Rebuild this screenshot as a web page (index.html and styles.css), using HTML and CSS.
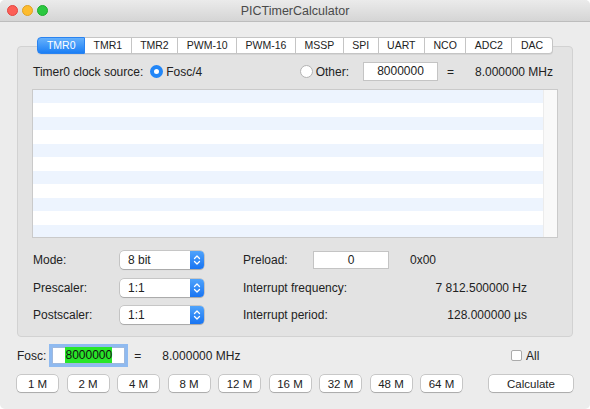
FILE: index.html
```html
<!DOCTYPE html>
<html>
	<head>
		<title>PICTimerCalculator</title>
		<link rel="stylesheet" href="styles.css">
	</head>
	<body>
		<div class="window">
			<div class="titlebar">
				<div class="lights">
					<span class="light light-red"></span>
					<span class="light light-yellow"></span>
					<span class="light light-green"></span>
				</div>
				<div class="title">PICTimerCalculator</div>
				<div></div>
			</div>

			<div class="content">
				<div class="tabs">
					<span class="tab is-selected">TMR0</span>
					<span class="tab">TMR1</span>
					<span class="tab">TMR2</span>
					<span class="tab">PWM-10</span>
					<span class="tab">PWM-16</span>
					<span class="tab">MSSP</span>
					<span class="tab">SPI</span>
					<span class="tab">UART</span>
					<span class="tab">NCO</span>
					<span class="tab">ADC2</span>
					<span class="tab">DAC</span>
				</div>

				<div class="panel">
					<div class="source-row">
						<span>Timer0 clock source:</span>
						<span class="radio-group fosc-radio"><span class="radio is-checked"></span>Fosc/4</span>
						<span class="radio-group other-radio"><span class="radio"></span>Other:</span>
						<div class="field other-field">8000000</div>
						<span class="equals">=</span>
						<span class="source-freq">8.000000 MHz</span>
					</div>

					<div class="table">
						<div class="table-rows"></div>
						<div class="table-scroll"></div>
					</div>

					<div class="form-grid">
						<span>Mode:</span>
						<div class="popup"><span>8 bit</span><span class="stepper"><svg width="8" height="12" viewBox="0 0 8 12"><path d="M1.5 4.5 L4 2 L6.5 4.5 M1.5 7.5 L4 10 L6.5 7.5" fill="none" stroke="white" stroke-width="1.3" stroke-linecap="round" stroke-linejoin="round"/></svg></span></div>
						<span></span>
						<span>Preload:</span>
						<div class="field preload-field">0</div>
						<span></span>
						<span>0x00</span>

						<span>Prescaler:</span>
						<div class="popup"><span>1:1</span><span class="stepper"><svg width="8" height="12" viewBox="0 0 8 12"><path d="M1.5 4.5 L4 2 L6.5 4.5 M1.5 7.5 L4 10 L6.5 7.5" fill="none" stroke="white" stroke-width="1.3" stroke-linecap="round" stroke-linejoin="round"/></svg></span></div>
						<span></span>
						<span class="wide-label">Interrupt frequency:</span>
						<span class="value">7 812.500000 Hz</span>

						<span>Postscaler:</span>
						<div class="popup"><span>1:1</span><span class="stepper"><svg width="8" height="12" viewBox="0 0 8 12"><path d="M1.5 4.5 L4 2 L6.5 4.5 M1.5 7.5 L4 10 L6.5 7.5" fill="none" stroke="white" stroke-width="1.3" stroke-linecap="round" stroke-linejoin="round"/></svg></span></div>
						<span></span>
						<span class="wide-label">Interrupt period:</span>
						<span class="value">128.000000 µs</span>
					</div>
				</div>

				<div class="footer">
					<div class="fosc-row">
						<span>Fosc:</span>
						<div class="field fosc-field"><span class="selected-text">8000000</span></div>
						<span class="fosc-equals">=</span>
						<span class="fosc-freq">8.000000 MHz</span>
					</div>
					<div class="all-check"><span class="checkbox"></span>All</div>

					<div class="preset-buttons">
						<button class="push-button">1 M</button>
						<button class="push-button">2 M</button>
						<button class="push-button">4 M</button>
						<button class="push-button">8 M</button>
						<button class="push-button">12 M</button>
						<button class="push-button">16 M</button>
						<button class="push-button">32 M</button>
						<button class="push-button">48 M</button>
						<button class="push-button">64 M</button>
					</div>
					<button class="push-button calculate-button">Calculate</button>
				</div>
			</div>
		</div>
	</body>
</html>
```

FILE: styles.css
```css
body{
	margin: 0;
	background-color: white;
	font-family: "Liberation Sans", Arial, sans-serif;
	font-size: 12px;
	color: #222222;
}
.window{
	width: 590px;
	height: 409px;
	background-color: #ececec;
	border-radius: 5px;
	overflow: hidden;
}
.titlebar{
	height: 21px;
	display: grid;
	grid-template-columns: 1fr auto 1fr;
	align-items: center;
	background: linear-gradient(#ebebeb, #d5d5d5);
	border-bottom: 1px solid #bdbdbd;
}
.lights{
	display: flex;
	gap: 4px;
	padding-left: 7px;
}
.light{
	width: 11px;
	height: 11px;
	border-radius: 50%;
	box-sizing: border-box;
}
.light-red{
	background-color: #fc5f57;
	border: 1px solid #e24640;
}
.light-yellow{
	background-color: #fdbc2e;
	border: 1px solid #dfa023;
}
.light-green{
	background-color: #2bc840;
	border: 1px solid #1eab2c;
}
.title{
	font-size: 12.5px;
	color: #4a4a4a;
}

.content{
	padding: 0 17px;
}
.tabs{
	display: flex;
	justify-content: center;
	margin-top: 15px;
	position: relative;
	z-index: 1;
}
.tab{
	height: 17px;
	box-sizing: border-box;
	padding: 0 8.5px;
	font-size: 10.5px;
	line-height: 15px;
	background-color: white;
	border: 1px solid #c5c5c5;
	border-left: none;
	box-shadow: 0 1px 0 rgba(0, 0, 0, 0.06);
}
.tab:first-child{
	border-left: 1px solid #c5c5c5;
	border-radius: 4px 0 0 4px;
}
.tab:last-child{
	border-radius: 0 4px 4px 0;
}
.tab.is-selected{
	background: linear-gradient(#66b1fc, #1b7ff5);
	border-color: #2a83f0;
	color: white;
}

.panel{
	margin-top: -8px;
	padding: 15px 14px 12px 14px;
	background-color: #e3e3e3;
	border: 1px solid #d2d2d2;
	border-radius: 4px;
}
.source-row{
	display: flex;
	align-items: center;
	height: 19px;
	padding-left: 1px;
}
.radio-group{
	display: flex;
	align-items: center;
	gap: 3px;
}
.fosc-radio{
	margin-left: 7px;
}
.other-radio{
	margin-left: auto;
}
.radio{
	width: 13px;
	height: 13px;
	box-sizing: border-box;
	border-radius: 50%;
	background-color: white;
	border: 1px solid #b3b3b3;
}
.radio.is-checked{
	border: 4px solid #2286f7;
	background-color: white;
}
.field{
	box-sizing: border-box;
	background-color: white;
	border: 1px solid #c4c4c4;
	text-align: center;
}
.other-field{
	width: 75px;
	height: 19px;
	line-height: 17px;
	margin-left: 14px;
}
.equals{
	margin-left: 9px;
}
.source-freq{
	width: 80px;
	text-align: right;
	margin-left: 19px;
	margin-right: 5px;
}

.table{
	display: flex;
	height: 149px;
	margin-top: 8px;
	box-sizing: border-box;
	border: 1px solid #cacaca;
}
.table-rows{
	flex: 1;
	background: repeating-linear-gradient(#edf4fe 0 13.5px, white 13.5px 27px);
}
.table-scroll{
	width: 13px;
	background-color: #f9f9f9;
	border-left: 1px solid #ececec;
}

.form-grid{
	display: grid;
	grid-template-columns: 87px 84px 39px 70px 76px 21px 117px;
	grid-auto-rows: 18px;
	row-gap: 9.5px;
	align-items: center;
	margin-top: 13px;
	padding-left: 1px;
}
.popup{
	display: flex;
	justify-content: space-between;
	height: 18px;
	box-sizing: border-box;
	padding-left: 8px;
	line-height: 18px;
	background-color: white;
	border-radius: 4px;
	box-shadow: 0 0 0 0.5px rgba(0, 0, 0, 0.25), 0 1px 1px rgba(0, 0, 0, 0.15);
	overflow: hidden;
}
.stepper{
	width: 14px;
	display: flex;
	align-items: center;
	justify-content: center;
	background: linear-gradient(#4fa3fb, #1874f2);
}
.preload-field{
	height: 18px;
	line-height: 16px;
}
.wide-label{
	grid-column: span 2;
}
.value{
	grid-column: span 2;
	text-align: right;
}

.footer{
	display: grid;
	grid-template-columns: 1fr 84px;
	grid-template-rows: 23px 17px;
	row-gap: 8px;
	align-items: center;
	margin-top: 7px;
}
.fosc-row{
	display: flex;
	align-items: center;
}
.fosc-field{
	width: 73px;
	height: 17px;
	line-height: 15px;
	margin-left: 6px;
	border-color: #9fb9de;
	box-shadow: 0 0 0 3px #8fbaf0;
}
.selected-text{
	background-color: #28e628;
	color: #111111;
	padding: 1px 0;
}
.fosc-equals{
	margin-left: 9px;
}
.fosc-freq{
	margin-left: 21px;
}
.all-check{
	display: flex;
	align-items: center;
	gap: 4px;
	padding-left: 22px;
}
.checkbox{
	width: 11px;
	height: 11px;
	box-sizing: border-box;
	background-color: white;
	border: 1px solid #ababab;
	border-radius: 2px;
}
.preset-buttons{
	display: flex;
	gap: 9.5px;
}
.push-button{
	width: 41px;
	height: 17px;
	padding: 0;
	font-family: "Liberation Sans", Arial, sans-serif;
	font-size: 11.5px;
	color: #222222;
	background-color: white;
	border: none;
	border-radius: 4px;
	box-shadow: 0 0 0 0.5px rgba(0, 0, 0, 0.3), 0 1px 1px rgba(0, 0, 0, 0.15);
}
.calculate-button{
	width: 84px;
}
```
